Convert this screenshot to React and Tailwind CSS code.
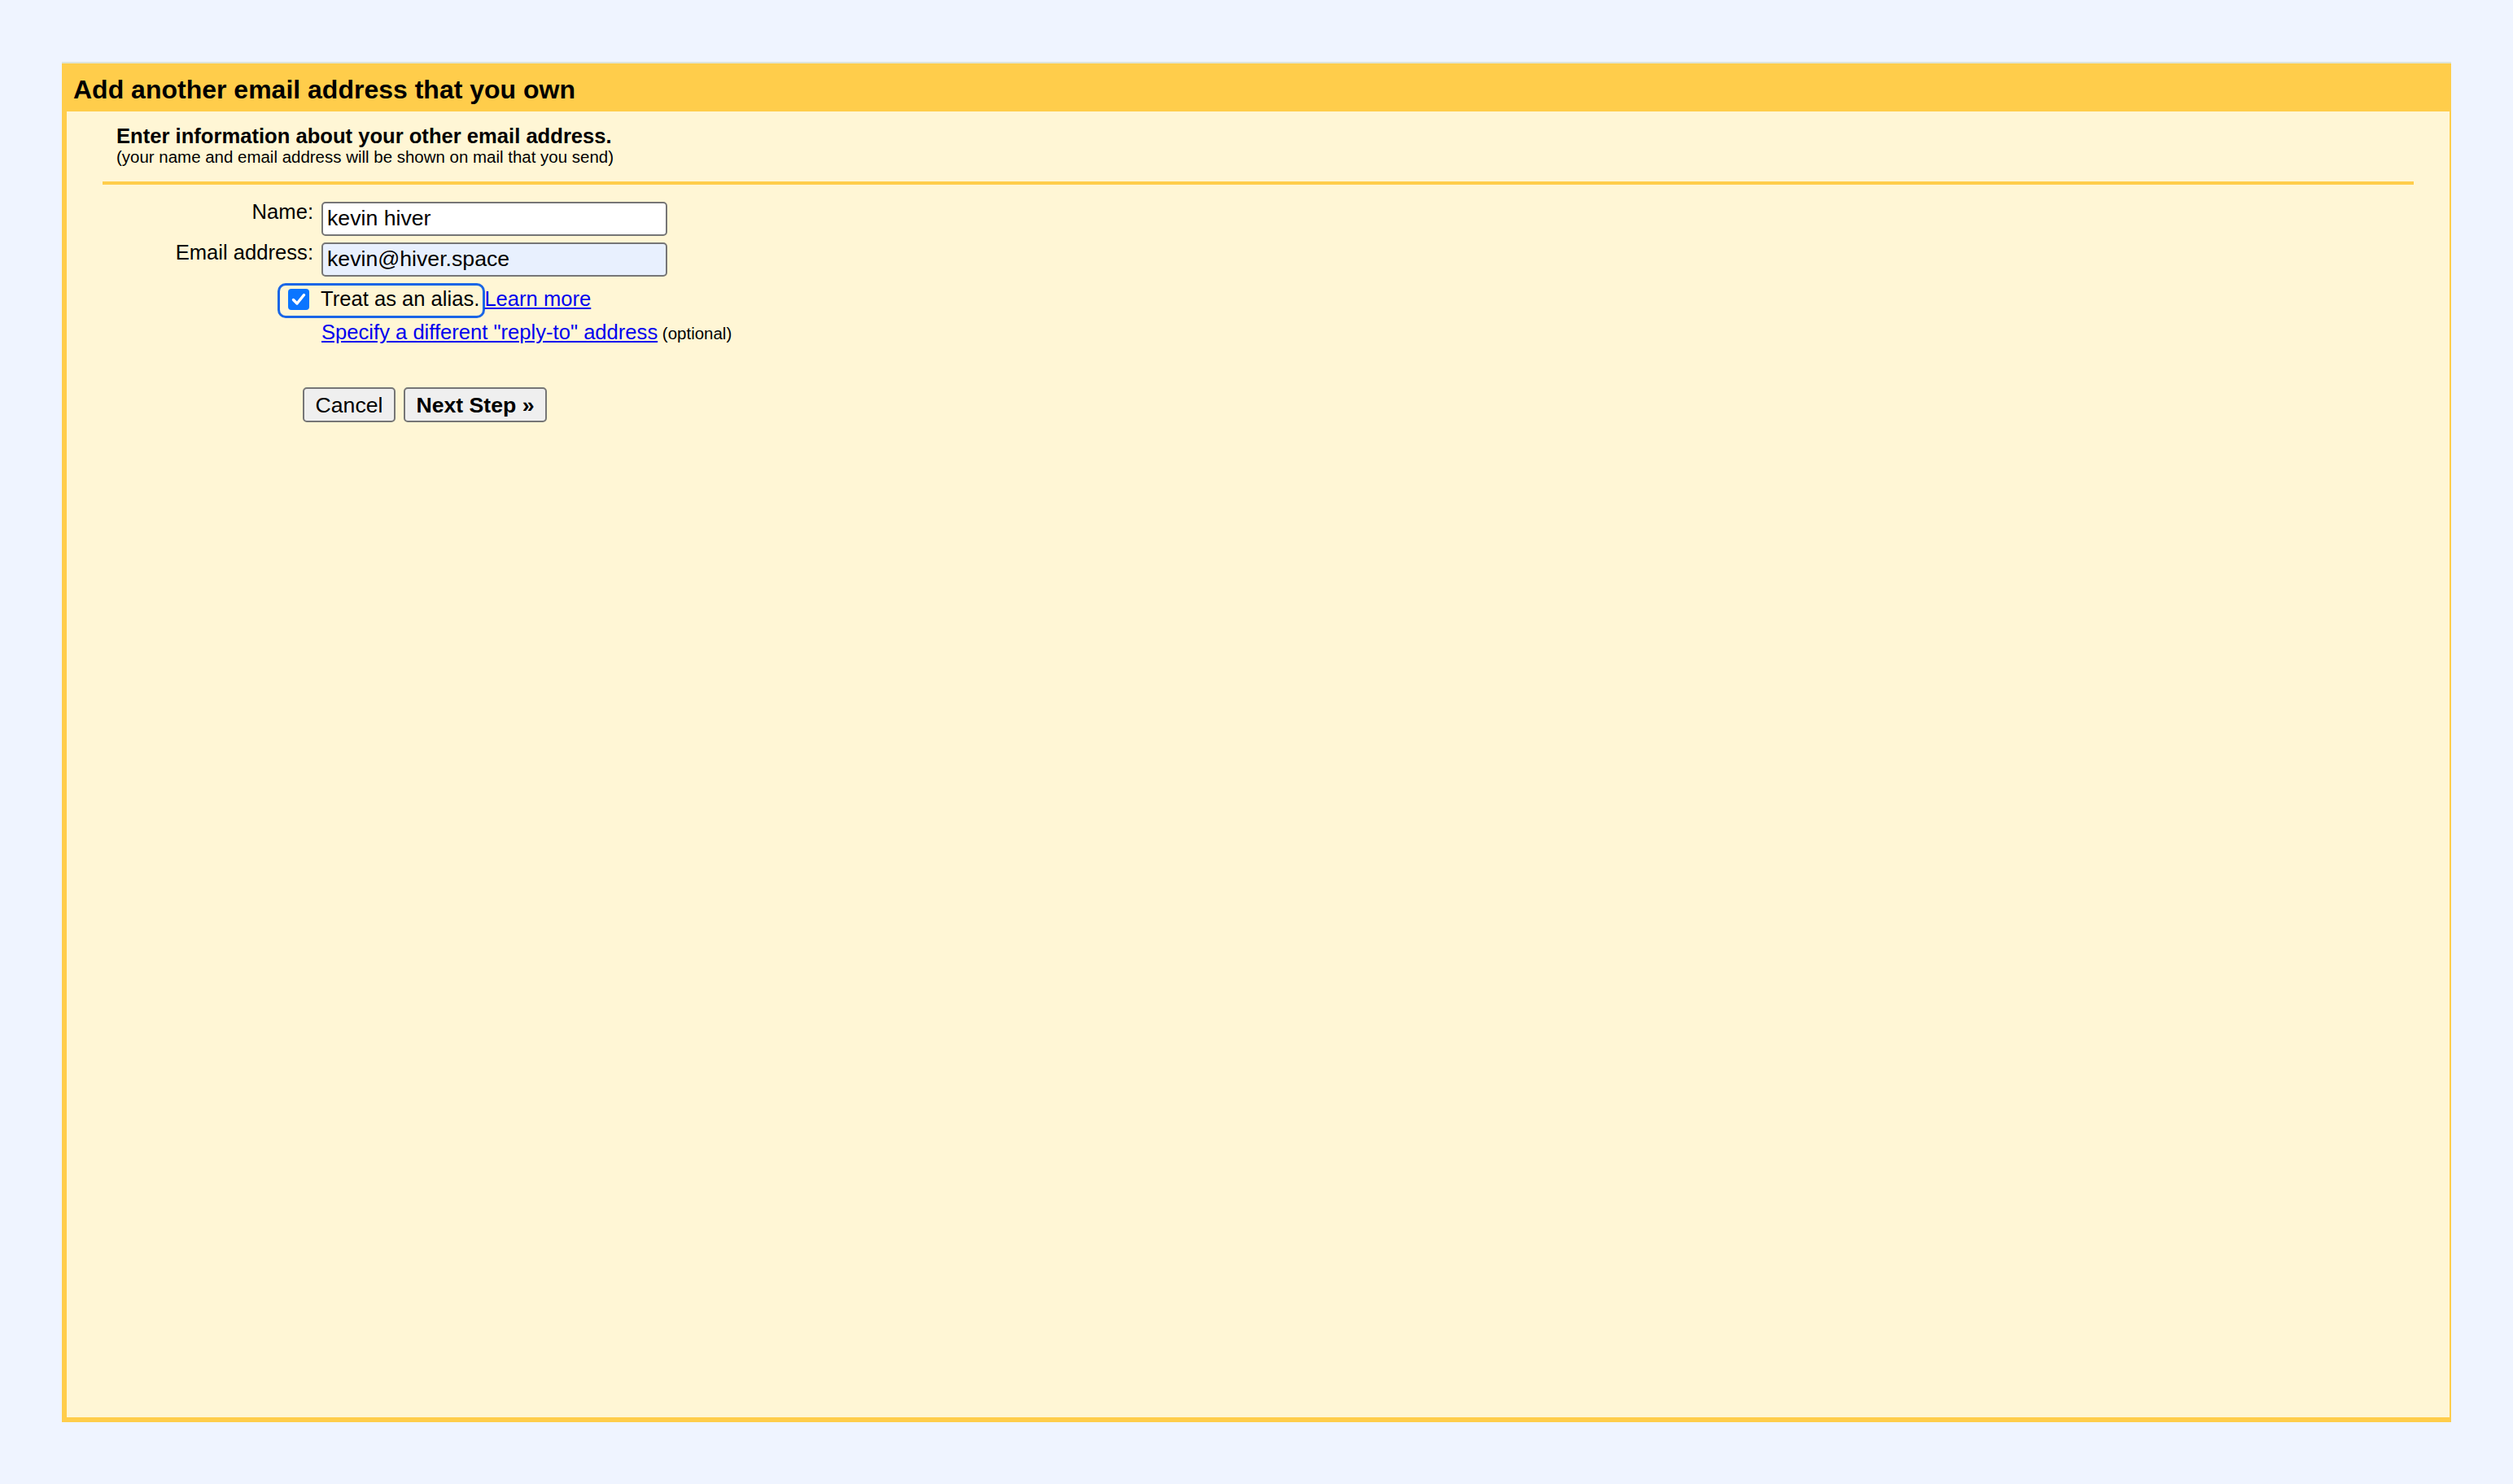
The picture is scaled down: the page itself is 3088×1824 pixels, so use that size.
import React from 'react';

const AddAddressDialog = () => {
  return (
    <div className="min-h-screen bg-[#eff4ff] p-[76px] flex flex-col font-['Liberation_Sans',Arial,sans-serif] text-black">
      <div className="flex-1 flex flex-col bg-[#ffcd4b] border-t-2 border-[#dde4d8]">
        {/* title bar */}
        <div className="h-[59px] pl-[14px] pt-[14px] text-[32px] leading-[37px] font-bold">
          Add another email address that you own
        </div>

        {/* body */}
        <div className="flex-1 ml-[6px] mr-[2px] mb-[6px] bg-[#fff6d5] pt-[17px]">
          <div className="pl-[61px]">
            <div className="text-[25.6px] leading-[27px] font-bold">Enter information about your other email address.</div>
            <div className="text-[20.48px] leading-[21px] mt-[1px]">(your name and email address will be shown on mail that you send)</div>
          </div>
          <div className="mx-[44px] mt-[20px] h-[4px] bg-[#ffcd4b]" />

          <div className="mt-[19px] text-[25.6px]">
            {/* name */}
            <div className="flex items-start">
              <div className="w-[303px] text-right leading-[29px]">Name:</div>
              <div className="ml-[10px] mt-[2px] w-[425px] h-[42px] px-[5px] pb-[2px] flex items-center bg-white border-2 border-[#767676] rounded-[5px] text-[26.67px]">
                kevin hiver
              </div>
            </div>

            {/* email */}
            <div className="flex items-start mt-[6px]">
              <div className="w-[303px] text-right leading-[29px]">Email address:</div>
              <div className="ml-[10px] mt-[2px] w-[425px] h-[42px] px-[5px] pb-[2px] flex items-center bg-[#e8f0fe] border-2 border-[#767676] rounded-[5px] text-[26.67px]">
                kevin@hiver.space
              </div>
            </div>

            {/* alias */}
            <div className="flex items-start mt-[8px]">
              <div className="w-[259px] shrink-0" />
              <div className="flex items-start h-[43px] pl-[10px] pr-[4px] border-[3px] border-[#1a66e6] rounded-[10px]">
                <div className="mt-[4px] w-[26px] h-[26px] rounded-[4px] bg-[#0a75ff] flex items-center justify-center">
                  <svg width="22" height="22" viewBox="0 0 22 22" fill="none">
                    <path d="M4.5 11.5 L9 16 L17.5 5.5" stroke="white" strokeWidth="3.4" strokeLinecap="round" strokeLinejoin="round" />
                  </svg>
                </div>
                <div className="ml-[14px] mt-[2px] leading-[29px]">Treat as an alias.</div>
              </div>
              <a href="#" className="mt-[5px] -ml-[1px] leading-[29px] text-[#0000ee] underline">Learn more</a>
            </div>

            {/* reply-to */}
            <div className="mt-[3px] pl-[313px] leading-[29px]">
              <a href="#" className="text-[#0000ee] underline">Specify a different "reply-to" address</a>
              <span className="text-[20.48px]"> (optional)</span>
            </div>

            {/* buttons */}
            <div className="flex gap-[10px] mt-[52px] pl-[290px] text-[26.67px]">
              <button className="w-[114px] h-[43px] bg-[#efefef] border-2 border-[#767676] rounded-[5px]">Cancel</button>
              <button className="w-[176px] h-[43px] bg-[#efefef] border-2 border-[#767676] rounded-[5px] font-bold">Next Step »</button>
            </div>
          </div>
        </div>
      </div>
    </div>
  );
};

export default function App() {
  return <AddAddressDialog />;
}
